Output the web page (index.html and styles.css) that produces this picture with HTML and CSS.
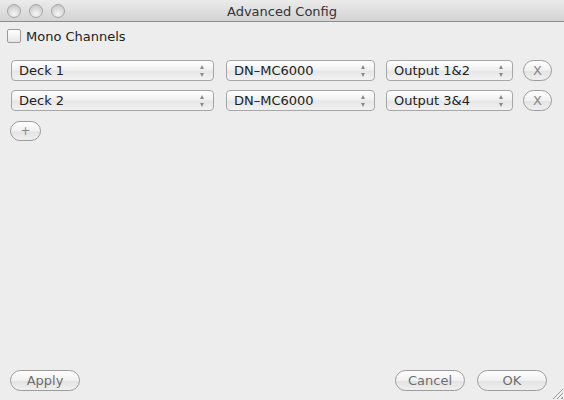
FILE: index.html
```html
<!DOCTYPE html>
<html lang="en">
<head>
    <meta charset="UTF-8">
    <title>Advanced Config</title>
    <link rel="stylesheet" href="styles.css">
</head>
<body>
    <div class="window">
        <div class="titlebar">
            <div class="lights">
                <span class="light"></span>
                <span class="light"></span>
                <span class="light"></span>
            </div>
            <div class="title">Advanced Config</div>
        </div>

        <div class="content">
            <label class="mono">
                <span class="checkbox"></span>
                <span>Mono Channels</span>
            </label>

            <div class="rows">
                <div class="row">
                    <div class="popup deck"><span>Deck 1</span><span class="arrows"></span></div>
                    <div class="popup device"><span>DN&#8211;MC6000</span><span class="arrows"></span></div>
                    <div class="popup output"><span>Output 1&amp;2</span><span class="arrows"></span></div>
                    <button class="round remove">X</button>
                </div>
                <div class="row">
                    <div class="popup deck"><span>Deck 2</span><span class="arrows"></span></div>
                    <div class="popup device"><span>DN&#8211;MC6000</span><span class="arrows"></span></div>
                    <div class="popup output"><span>Output 3&amp;4</span><span class="arrows"></span></div>
                    <button class="round remove">X</button>
                </div>
            </div>

            <button class="round add">+</button>
        </div>

        <div class="footer">
            <button class="round wide">Apply</button>
            <div class="spacer"></div>
            <button class="round wide">Cancel</button>
            <button class="round wide">OK</button>
        </div>
        <div class="grip"></div>
    </div>
</body>
</html>
```

FILE: styles.css
```css
body {
    margin: 0;
    font-family: "DejaVu Sans", "Liberation Sans", sans-serif;
    font-size: 13px;
    color: #222;
}
.window {
    position: relative;
    width: 564px;
    height: 400px;
    background-color: #ededed;
    display: flex;
    flex-direction: column;
    overflow: hidden;
}
.titlebar {
    height: 21px;
    border-bottom: 1px solid #8c8c8c;
    background: linear-gradient(#ebebeb, #d3d3d3);
    position: relative;
    display: flex;
    align-items: center;
    justify-content: center;
    flex-shrink: 0;
}
.lights {
    position: absolute;
    left: 7px;
    top: 4px;
    display: flex;
    gap: 8px;
}
.light {
    width: 12px;
    height: 12px;
    border-radius: 50%;
    border: 1px solid #a4a4a4;
    background: radial-gradient(circle at 50% 75%, #f6f6f6, #d0d0d0 70%, #bdbdbd);
}
.title {
    font-size: 13px;
    color: #333;
    padding-top: 1px;
}
.content {
    flex: 1;
    padding: 6px 11px 0 7px;
}
.mono {
    display: flex;
    align-items: center;
    gap: 5px;
    height: 16px;
}
.checkbox {
    width: 12px;
    height: 12px;
    border: 1px solid #9a9a9a;
    border-radius: 2px;
    background: linear-gradient(#ffffff, #e6e6e6);
}
.rows {
    display: flex;
    flex-direction: column;
    gap: 9px;
    margin-top: 16px;
    padding-left: 4px;
}
.row {
    display: flex;
    align-items: center;
    height: 21px;
}
.popup {
    height: 19px;
    border: 1px solid #a6a6a6;
    border-radius: 4px;
    background: linear-gradient(#ffffff, #f1f1f1 45%, #e6e6e6 55%, #f2f2f2);
    display: flex;
    align-items: center;
    justify-content: space-between;
    padding: 0 8px 0 7px;
    box-sizing: content-box;
}
.deck {
    width: 186px;
    margin-right: 12px;
}
.device {
    width: 132px;
    margin-right: 11px;
}
.output {
    width: 110px;
    margin-right: 10px;
}
.arrows {
    width: 5px;
    height: 12px;
    position: relative;
}
.arrows::before,
.arrows::after {
    content: "";
    position: absolute;
    left: 0;
    border-left: 2.5px solid transparent;
    border-right: 2.5px solid transparent;
}
.arrows::before {
    top: 0;
    border-bottom: 4px solid #8a8a8a;
}
.arrows::after {
    bottom: 0;
    border-top: 4px solid #8a8a8a;
}
.round {
    font-family: inherit;
    font-size: 13px;
    height: 21px;
    border: 1px solid #9c9c9c;
    border-radius: 11px;
    background: linear-gradient(#ffffff, #f0f0f0 50%, #e4e4e4 55%, #efefef);
    color: #6e6e6e;
    padding: 0;
    display: flex;
    align-items: center;
    justify-content: center;
}
.remove {
    width: 29px;
    color: #888;
}
.add {
    width: 31px;
    height: 20px;
    margin-top: 10px;
    margin-left: 3px;
    font-size: 12px;
    color: #888;
}
.footer {
    display: flex;
    gap: 12px;
    padding: 0 17px 9px 10px;
}
.spacer {
    flex: 1;
}
.wide {
    width: 70px;
}
.grip {
    position: absolute;
    right: 1px;
    bottom: 1px;
    width: 11px;
    height: 11px;
    background: repeating-linear-gradient(135deg, transparent 0, transparent 2px, #999 2px, #999 3px);
    clip-path: polygon(100% 0, 100% 100%, 0 100%);
}
```
